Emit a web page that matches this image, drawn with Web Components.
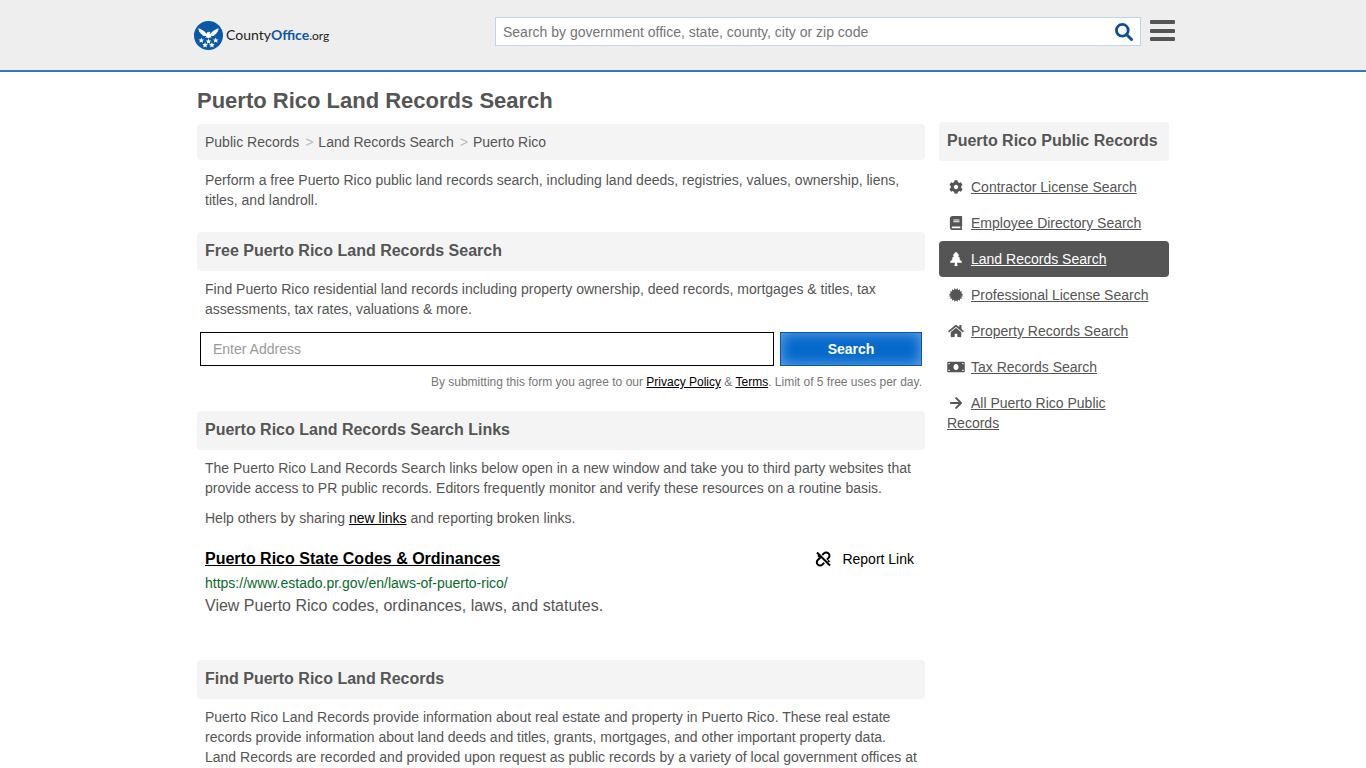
<!DOCTYPE html>
<html lang="en">
<head>
<meta charset="utf-8">
<meta name="viewport" content="width=device-width, initial-scale=1">
<title>Puerto Rico Land Records Search</title>
<style>
	body {
		margin: 0;
		background: #fff;
		color: #555;
		font: 14px/20px "Liberation Sans", Arial, sans-serif;
	}
	a {
		color: #000;
	}
	.page {
		display: flex;
		align-items: flex-start;
		gap: 14px;
		max-width: 972px;
		margin: 0 auto;
	}
	main {
		flex: 1;
		min-width: 0;
	}
	h1 {
		margin: 15px 0 9px;
		font-size: 22px;
		line-height: 28px;
	}
	.intro {
		margin: 10px 8px 0;
	}
</style>
</head>
<body>
	<co-header></co-header>
	<div class="page">
		<main>
			<h1>Puerto Rico Land Records Search</h1>
			<co-breadcrumb items="Public Records|Land Records Search|Puerto Rico"></co-breadcrumb>
			<p class="intro">Perform a free Puerto Rico public land records search, including land deeds, registries, values, ownership, liens, titles, and landroll.</p>

			<co-section heading="Free Puerto Rico Land Records Search">
				<p>Find Puerto Rico residential land records including property ownership, deed records, mortgages &amp; titles, tax assessments, tax rates, valuations &amp; more.</p>
				<co-address-form></co-address-form>
			</co-section>

			<co-section heading="Puerto Rico Land Records Search Links">
				<p>The Puerto Rico Land Records Search links below open in a new window and take you to third party websites that provide access to PR public records. Editors frequently monitor and verify these resources on a routine basis.</p>
				<p>Help others by sharing <a href="#new">new links</a> and reporting broken links.</p>
				<co-resource heading="Puerto Rico State Codes &amp; Ordinances" url="https://www.estado.pr.gov/en/laws-of-puerto-rico/">View Puerto Rico codes, ordinances, laws, and statutes.</co-resource>
			</co-section>

			<co-section heading="Find Puerto Rico Land Records">
				<p>Puerto Rico Land Records provide information about real estate and property in Puerto Rico. These real estate records provide information about land deeds and titles, grants, mortgages, and other important property data. Land Records are recorded and provided upon request as public records by a variety of local government offices at</p>
			</co-section>
		</main>

		<co-sidebar heading="Puerto Rico Public Records">
			<co-nav-item icon="gear" href="#contractor">Contractor License Search</co-nav-item>
			<co-nav-item icon="book" href="#employee">Employee Directory Search</co-nav-item>
			<co-nav-item icon="tree" href="#land" active>Land Records Search</co-nav-item>
			<co-nav-item icon="seal" href="#license">Professional License Search</co-nav-item>
			<co-nav-item icon="home" href="#property">Property Records Search</co-nav-item>
			<co-nav-item icon="money" href="#tax">Tax Records Search</co-nav-item>
			<co-nav-item icon="arrow" href="#all">All Puerto Rico Public Records</co-nav-item>
		</co-sidebar>
	</div>

<script>
// viewBox + markup for every icon, drawn in currentColor
const ICONS = {
	gear: ["12 0 488 512", `<path d="M487.400 315.700l-42.600-24.600c4.300-23.200 4.300-47 0-70.200l42.600-24.600c4.900-2.800 7.100-8.600 5.500-14-11.100-35.600-30-67.800-54.700-94.600-3.800-4.100-10-5.100-14.800-2.300L380.800 110c-17.900-15.400-38.500-27.300-60.800-35.100V25.800c0-5.600-3.900-10.500-9.400-11.700-36.700-8.200-74.300-7.800-109.200 0-5.500 1.200-9.400 6.100-9.400 11.700V75c-22.200 7.900-42.800 19.800-60.800 35.100L88.700 85.500c-4.900-2.800-11-1.900-14.800 2.300-24.700 26.700-43.600 58.900-54.700 94.600-1.700 5.400.6 11.200 5.500 14L67.300 221c-4.300 23.200-4.300 47 0 70.200l-42.600 24.600c-4.900 2.800-7.100 8.600-5.500 14 11.100 35.600 30 67.800 54.700 94.600 3.800 4.100 10 5.100 14.800 2.300l42.600-24.600c17.900 15.400 38.500 27.300 60.800 35.100v49.200c0 5.600 3.900 10.500 9.400 11.700 36.700 8.200 74.300 7.800 109.200 0 5.500-1.200 9.400-6.100 9.400-11.700v-49.200c22.200-7.900 42.800-19.800 60.800-35.100l42.600 24.600c4.900 2.800 11 1.900 14.800-2.300 24.700-26.700 43.600-58.900 54.700-94.600 1.500-5.500-.7-11.300-5.600-14.100zM256 336c-44.100 0-80-35.900-80-80s35.900-80 80-80 80 35.900 80 80-35.900 80-80 80z"/>`],
	book: ["0 0 448 512", `<path d="M448 360V24c0-13.300-10.700-24-24-24H96C43 0 0 43 0 96v320c0 53 43 96 96 96h328c13.300 0 24-10.700 24-24v-16c0-7.500-3.500-14.300-8.900-18.700-4.200-15.400-4.200-59.300 0-74.700 5.400-4.300 8.900-11.100 8.900-18.600zM128 134c0-3.300 2.700-6 6-6h212c3.300 0 6 2.700 6 6v20c0 3.300-2.700 6-6 6H134c-3.300 0-6-2.700-6-6v-20zm0 64c0-3.300 2.700-6 6-6h212c3.300 0 6 2.700 6 6v20c0 3.300-2.700 6-6 6H134c-3.300 0-6-2.700-6-6v-20zm253.400 250H96c-17.700 0-32-14.300-32-32 0-17.600 14.400-32 32-32h285.400c-1.900 17.100-1.900 46.900 0 64z"/>`],
	tree: ["0 0 448 512", `<path d="M224 0c8 0 15 3 20 9l90 100c9 10 2 27-12 27h-34l80 84c9 10 2 28-12 28h-20l104 108c12 12 3 36-14 36H264v56l20 40c4 8-2 24-16 24h-88c-14 0-20-16-16-24l20-40v-56H22c-17 0-26-24-14-36l104-108H92c-14 0-21-18-12-28l80-84h-34c-14 0-21-17-12-27l90-100c5-6 12-9 20-9z"/>`],
	seal: ["0 0 512 512", `<path d="M256 62L308 0l22 78 74-34-6 82 82-6-34 74 78 22-64 40 64 40-78 22 34 74-82-6 6 82-74-34-22 78-52-62-52 62-22-78-74 34 6-82-82 6 34-74-78-22 64-40-64-40 78-22-34-74 82 6-6-82 74 34 22-78z"/>`],
	home: ["0 0 576 512", `<path d="M280.400 148.300L96 300.100V464a16 16 0 0 0 16 16l112-.3a16 16 0 0 0 16-16V368a16 16 0 0 1 16-16h64a16 16 0 0 1 16 16v95.600a16 16 0 0 0 16 16L464 480a16 16 0 0 0 16-16V300L295.700 148.300a12 12 0 0 0-15.300 0zM571.600 251.500L488 182.600V44a12 12 0 0 0-12-12h-56a12 12 0 0 0-12 12v72.600L318.500 43a48 48 0 0 0-61 0L4.300 251.500a12 12 0 0 0-1.600 16.900l25.500 31A12 12 0 0 0 45.100 301l235.300-193.700a12 12 0 0 1 15.300 0L530.900 301a12 12 0 0 0 16.900-1.600l25.500-31a12 12 0 0 0-1.700-16.900z"/>`],
	money: ["0 0 640 512", `<path fill-rule="evenodd" d="M32 64h576c18 0 32 14 32 32v320c0 18-14 32-32 32H32c-18 0-32-14-32-32V96c0-18 14-32 32-32zM48 112v52c29 0 52-23 52-52zm0 288h52c0-29-23-52-52-52zm544 0v-52c-29 0-52 23-52 52zm0-288h-52c0 29 23 52 52 52zM320 144c-53 0-92 50-92 112s39 112 92 112 92-50 92-112-39-112-92-112z"/>`],
	arrow: ["0 0 448 512", `<path d="M36 256h370M230 78l178 178-178 178" fill="none" stroke="currentColor" stroke-width="72" stroke-linecap="round" stroke-linejoin="round"/>`],
	search: ["0 0 18 18", `<circle cx="7.300" cy="7.300" r="5.900" fill="none" stroke="currentColor" stroke-width="2.800"/><path d="M11.500 11.500l5 5" stroke="currentColor" stroke-width="3" stroke-linecap="round"/>`],
	menu: ["0 0 25 22", `<rect y="0" width="25" height="4" rx="1"/><rect y="9" width="25" height="4" rx="1"/><rect y="17" width="25" height="4" rx="1"/>`],
	unlink: ["0 0 16 16", `<g fill="none" stroke="currentColor" stroke-width="2"><path d="M2 1.500L15 14.500"/><path d="M7.300 4l1.600-1.600a3.200 3.200 0 0 1 4.600 0 3.200 3.200 0 0 1 0 4.600L11.900 8.600"/><path d="M9.200 11.800l-1.800 1.800a3.200 3.200 0 0 1-4.600 0 3.200 3.200 0 0 1 0-4.600L5.600 6.200"/><path d="M13 9.300l1.300 1.700M3 4.300l1.500 1.500"/></g>`],
	logo: ["0 0 29 29", `<circle cx="14.500" cy="14.500" r="14.500" fill="#0b57a8"/><g fill="#fff"><path d="M4.200 7.200c3 .9 6.300 2.600 8.300 5.500.4-1.200 1-2 2.200-2 .9 0 1.500.6 1.900 1.100l-1 .4c.1.200.3.400.9.500 2-2.900 5.300-4.600 8.300-5.500-.1 1.200-.6 2-1.400 2.700l.7.100c-.4 1-1.100 1.600-1.900 2l.5.300c-.6.900-1.400 1.300-2.300 1.500l.3.400c-.9.700-2.300.9-3.500.9l-.4.600 1.200 1.100-2.100-.3-1.400 1.100-1.400-1.100-2.100.3 1.200-1.100-.4-.6c-1.200 0-2.600-.2-3.500-.9l.3-.4c-.9-.2-1.700-.6-2.300-1.500l.5-.3c-.8-.4-1.500-1-1.900-2l.7-.1c-.8-.7-1.300-1.500-1.400-2.700z"/><path id="s" d="M7.300 16.500l.8 1.900 2 .1-1.500 1.300.5 2-1.800-1.100-1.800 1.100.5-2-1.500-1.300 2-.1z"/><use href="#s" x="7.200" y="1"/><use href="#s" x="14.400"/><use href="#s" x="3.800" y="4.700"/><use href="#s" x="10.600" y="4.700"/></g>`],
}

class CoIcon extends HTMLElement {
	connectedCallback() {
		const [box, shape] = ICONS[this.getAttribute("name")]
		this.attachShadow({ mode: "open" }).innerHTML = `
		<style>
			:host {
				display: inline-block;
				width: 14px;
				height: 14px;
			}
			svg {
				display: block;
				width: 100%;
				height: 100%;
			}
		</style>
		<svg viewBox="${box}" fill="currentColor" aria-hidden="true">${shape}</svg>
		`
	}
}
customElements.define("co-icon", CoIcon)

class CoHeader extends HTMLElement {
	connectedCallback() {
		this.attachShadow({ mode: "open" }).innerHTML = `
		<style>
			:host {
				display: block;
				background: #eee;
				border-bottom: 2px solid #3577b5;
			}
			header {
				display: flex;
				align-items: flex-start;
				box-sizing: border-box;
				max-width: 984px;
				min-height: 70px;
				margin: 0 auto;
				padding: 17px 0 0 3px;
			}
			.logo {
				display: flex;
				align-items: center;
				gap: 3px;
				margin-top: 3px;
				color: #222;
				font: 14px/29px Lato, sans-serif;
				text-decoration: none;
			}
			.logo co-icon {
				width: 29px;
				height: 29px;
			}
			.logo b {
				color: #0b57a8;
			}
			.logo i {
				font-size: 12px;
				font-style: normal;
			}
			form {
				display: flex;
				flex: 0 1 644px;
				height: 27px;
				margin: 0 9px 0 auto;
				border: 1px solid #bcd5e8;
				background: #fff;
			}
			input {
				flex: 1;
				min-width: 0;
				padding: 0 7px;
				border: 0;
				background: none;
				font: inherit;
			}
			input::placeholder {
				color: #757575;
			}
			button {
				padding: 0;
				border: 0;
				background: none;
				color: #555;
				cursor: pointer;
			}
			form button {
				padding: 0 7px;
				color: #0b4f9c;
			}
			form co-icon {
				display: block;
				width: 18px;
				height: 18px;
			}
			.menu {
				margin-top: 3px;
			}
			.menu co-icon {
				display: block;
				width: 25px;
				height: 22px;
			}
		</style>
		<header>
			<a class="logo" href="#home"><co-icon name="logo"></co-icon><span>County<b>Office</b><i>.org</i></span></a>
			<form role="search">
				<input type="text" aria-label="Search offices" placeholder="Search by government office, state, county, city or zip code">
				<button type="button" aria-label="Search"><co-icon name="search"></co-icon></button>
			</form>
			<button class="menu" type="button" aria-label="Menu"><co-icon name="menu"></co-icon></button>
		</header>
		`
	}
}
customElements.define("co-header", CoHeader)

class CoBreadcrumb extends HTMLElement {
	connectedCallback() {
		const items = this.getAttribute("items").split("|")
		this.attachShadow({ mode: "open" }).innerHTML = `
		<style>
			:host {
				display: block;
				padding: 8px;
				border-radius: 4px;
				background: #f4f4f4;
			}
			nav {
				display: flex;
				flex-wrap: wrap;
			}
			a {
				color: #555;
				text-decoration: none;
			}
			span {
				margin: 0 5px 0 6px;
				color: #bbb;
			}
		</style>
		<nav aria-label="Breadcrumb">${items.map(item => `<a href="#">${item}</a>`).join("<span>&gt;</span>")}</nav>
		`
	}
}
customElements.define("co-breadcrumb", CoBreadcrumb)

class CoSection extends HTMLElement {
	connectedCallback() {
		this.attachShadow({ mode: "open" }).innerHTML = `
		<style>
			:host {
				display: block;
				margin-top: 22px;
			}
			h2 {
				margin: 0 0 8px;
				padding: 8px 8px 10px;
				border-radius: 4px;
				background: #f4f4f4;
				font-size: 16px;
				line-height: 21px;
			}
			::slotted(p) {
				margin: 0 8px 10px;
			}
			::slotted(p:last-child) {
				margin-bottom: 0;
			}
		</style>
		<h2>${this.getAttribute("heading")}</h2>
		<slot></slot>
		`
	}
}
customElements.define("co-section", CoSection)

class CoAddressForm extends HTMLElement {
	connectedCallback() {
		this.attachShadow({ mode: "open" }).innerHTML = `
		<style>
			:host {
				display: block;
				padding: 3px 3px 0;
			}
			form {
				display: flex;
				gap: 6px;
			}
			input, button {
				box-sizing: border-box;
				height: 34px;
				border-radius: 0;
				font: inherit;
			}
			input {
				flex: 1;
				min-width: 0;
				padding: 0 12px;
				border: 1px solid #000;
			}
			input::placeholder {
				color: #999;
			}
			button {
				width: 142px;
				border: 1px solid #0d57a6;
				background: #0568cb;
				box-shadow: inset 0 0 14px #6aaae8;
				color: #fff;
				font-weight: bold;
				cursor: pointer;
			}
			p {
				margin: 9px 0 0;
				color: #777;
				font-size: 12px;
				line-height: 14px;
				text-align: right;
			}
			a {
				color: #000;
			}
		</style>
		<form>
			<input type="text" aria-label="Address" placeholder="Enter Address">
			<button type="button">Search</button>
		</form>
		<p>By submitting this form you agree to our <a href="#privacy">Privacy Policy</a> &amp; <a href="#terms">Terms</a>. Limit of 5 free uses per day.</p>
		`
	}
}
customElements.define("co-address-form", CoAddressForm)

class CoResource extends HTMLElement {
	connectedCallback() {
		const url = this.getAttribute("url")
		this.attachShadow({ mode: "open" }).innerHTML = `
		<style>
			:host {
				display: block;
				padding: 9px 8px 20px;
			}
			.top {
				display: flex;
				justify-content: space-between;
				align-items: center;
			}
			h3 {
				margin: 0;
				font-size: 16px;
				line-height: 24px;
			}
			a {
				color: #000;
			}
			button {
				display: flex;
				align-items: center;
				gap: 11px;
				padding: 0 3px;
				border: 0;
				background: none;
				color: #000;
				font: inherit;
				cursor: pointer;
			}
			co-icon {
				width: 16px;
				height: 16px;
			}
			.url {
				margin-top: 2px;
				color: #0a6a2e;
			}
			.desc {
				margin-top: 1px;
				font-size: 16px;
				line-height: 24px;
			}
		</style>
		<div class="top">
			<h3><a href="${url}" target="_blank">${this.getAttribute("heading")}</a></h3>
			<button type="button"><co-icon name="unlink"></co-icon>Report Link</button>
		</div>
		<div class="url">${url}</div>
		<div class="desc"><slot></slot></div>
		`
	}
}
customElements.define("co-resource", CoResource)

class CoSidebar extends HTMLElement {
	connectedCallback() {
		this.attachShadow({ mode: "open" }).innerHTML = `
		<style>
			:host {
				display: block;
				flex: 0 0 230px;
				margin-top: 50px;
			}
			h2 {
				margin: 0 0 8px;
				padding: 8px 8px 10px;
				border-radius: 4px;
				background: #f4f4f4;
				font-size: 16px;
				line-height: 21px;
			}
		</style>
		<h2>${this.getAttribute("heading")}</h2>
		<nav><slot></slot></nav>
		`
	}
}
customElements.define("co-sidebar", CoSidebar)

class CoNavItem extends HTMLElement {
	connectedCallback() {
		this.attachShadow({ mode: "open" }).innerHTML = `
		<style>
			:host {
				display: block;
				padding: 8px;
				border-radius: 4px;
			}
			:host([active]) {
				background: #555;
				color: #fff;
			}
			co-icon {
				width: 18px;
				margin-right: 6px;
				vertical-align: -2px;
			}
			a {
				color: inherit;
			}
		</style>
		<co-icon name="${this.getAttribute("icon")}"></co-icon><a href="${this.getAttribute("href")}"><slot></slot></a>
		`
	}
}
customElements.define("co-nav-item", CoNavItem)
</script>
</body>
</html>
